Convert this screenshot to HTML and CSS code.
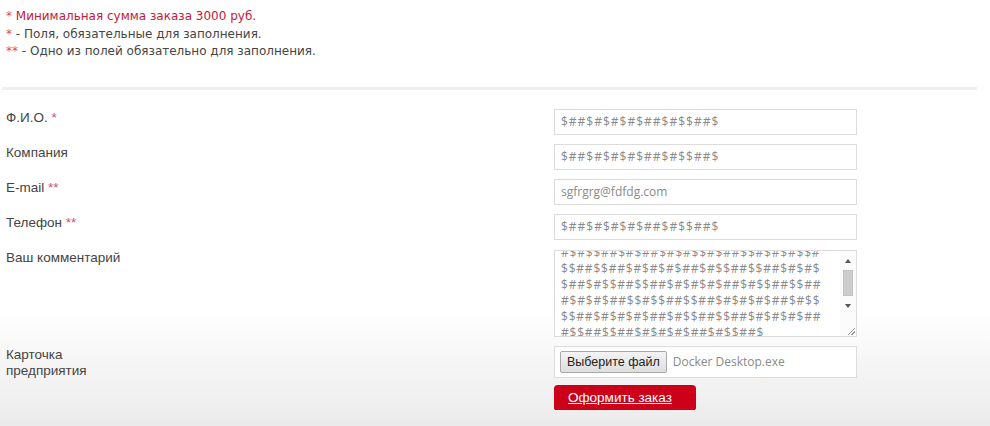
FILE: index.html
```html
<!DOCTYPE html>
<html lang="ru">
  <head>
    <meta charset="UTF-8" />
    <title>Оформление заказа</title>
    <link rel="stylesheet" href="styles.css">
  </head>
  <body>
    <div class="order-page">
      <!-- Notes -->
      <div class="notes">
        <p class="note-min"><span class="star">*</span> Минимальная сумма заказа 3000 руб.</p>
        <p><span class="star">*</span> - Поля, обязательные для заполнения.</p>
        <p><span class="star">**</span> - Одно из полей обязательно для заполнения.</p>
      </div>

      <hr class="divider">

      <!-- Order form -->
      <form class="order-form">
        <label class="form-label">Ф.И.О. <span class="star">*</span></label>
        <input class="form-input symbols" type="text" value="$##$#$#$#$##$#$$##$">

        <label class="form-label">Компания</label>
        <input class="form-input symbols" type="text" value="$##$#$#$#$##$#$$##$">

        <label class="form-label">E-mail <span class="star">**</span></label>
        <input class="form-input" type="text" value="sgfrgrg@fdfdg.com">

        <label class="form-label">Телефон <span class="star">**</span></label>
        <input class="form-input symbols" type="text" value="$##$#$#$#$##$#$$##$">

        <label class="form-label">Ваш комментарий</label>
        <div class="comment-box">
          <div class="comment-text">#$#$$##$#$##$#$#$$#$##$$#$#$#$$#
$$##$$##$#$#$#$##$#$$##$$##$#$#$
$##$#$$##$$##$#$#$#$##$#$$##$$##
#$#$#$##$$#$$##$$##$#$#$#$##$#$$
$$##$#$#$#$##$#$$##$$##$#$#$#$##
#$$##$$##$#$#$#$##$#$$##$</div>
          <div class="scrollbar">
            <span class="arrow-up"></span>
            <span class="thumb"></span>
            <span class="arrow-down"></span>
            <span class="grip"></span>
          </div>
        </div>

        <label class="form-label">Карточка<br>предприятия</label>
        <div class="file-box">
          <button type="button" class="file-button">Выберите файл</button>
          <span class="file-name">Docker Desktop.exe</span>
        </div>

        <span></span>
        <div>
          <button type="button" class="submit-button">Оформить заказ</button>
        </div>
      </form>
    </div>
  </body>
</html>
```

FILE: styles.css
```css
html {
  background: linear-gradient(to bottom, #ffffff 0, #ffffff 310px, #ebebeb 426px);
  min-height: 100%;
}

body {
  margin: 0;
  padding: 0;
  font-family: "Liberation Sans", Arial, sans-serif;
  color: #333;
  overflow: hidden;
}

.order-page {
  padding: 8px 6px 0 6px;
}

.notes {
  font-family: "DejaVu Sans", Tahoma, sans-serif;
  font-size: 12px;
  color: #444;
}

.notes p {
  margin: 0;
  line-height: 17.5px;
}

.notes .note-min {
  color: #c41a3a;
}

.star {
  color: #d0506a;
}

.divider {
  border: none;
  height: 3px;
  background-color: #efefef;
  margin: 26px -1px 0 -4px;
  width: 975px;
}

.order-form {
  display: grid;
  grid-template-columns: 548px 303px;
  column-gap: 0;
  row-gap: 9px;
  margin-top: 19px;
  font-size: 13.5px;
}

.form-label {
  color: #444;
  line-height: 16px;
  padding-top: 1px;
}

.form-input {
  box-sizing: border-box;
  height: 26px;
  width: 303px;
  border: 1px solid #dcdcdc;
  padding: 0 6px;
  font-family: "Open Sans", sans-serif;
  font-size: 12px;
  color: #8a8a8a;
  background: #fff;
  outline: none;
}

.form-input.symbols {
  letter-spacing: 1px;
}

.comment-box {
  box-sizing: border-box;
  display: flex;
  height: 87px;
  border: 1px solid #dcdcdc;
  background: #fff;
  overflow: hidden;
  margin-top: 1px;
}

.comment-text {
  flex: 1;
  padding: 0 2px 0 6px;
  margin-top: -6px;
  white-space: pre;
  overflow: hidden;
  font-family: "Open Sans", sans-serif;
  font-size: 12px;
  line-height: 16px;
  color: #8a8a8a;
  letter-spacing: 0.8px;
}

.scrollbar {
  width: 16px;
  display: flex;
  flex-direction: column;
  align-items: center;
  background: #fbfbfb;
  position: relative;
}

.arrow-up,
.arrow-down {
  width: 0;
  height: 0;
  border-left: 3px solid transparent;
  border-right: 3px solid transparent;
  margin: 8px 0 7px;
}

.arrow-up {
  border-bottom: 4px solid #555;
}

.arrow-down {
  border-top: 4px solid #555;
  margin-top: 8px;
}

.thumb {
  width: 10px;
  height: 26px;
  background: #cdcdcd;
  border: 1px dotted #bbb;
  box-sizing: border-box;
}

.grip {
  position: absolute;
  right: 1px;
  bottom: 1px;
  width: 7px;
  height: 7px;
  background: linear-gradient(135deg, transparent 45%, #999 45%, #999 55%, transparent 55%, transparent 70%, #999 70%, #999 80%, transparent 80%);
}

.file-box {
  box-sizing: border-box;
  display: flex;
  align-items: center;
  gap: 6px;
  height: 32px;
  border: 1px solid #dcdcdc;
  background: #fff;
  padding: 0 5px;
}

.file-button {
  font-family: "Liberation Sans", Arial, sans-serif;
  font-size: 12.5px;
  color: #222;
  height: 22px;
  padding: 0 6px;
  border: 1px solid #a9a9a9;
  border-radius: 2px;
  background: linear-gradient(#f4f4f4, #dedede);
}

.file-name {
  font-family: "Open Sans", sans-serif;
  font-size: 12px;
  color: #8a8a8a;
}

.submit-button {
  margin-top: -3px;
  width: 142px;
  height: 25px;
  padding: 0 0 0 14px;
  text-align: left;
  border: none;
  border-radius: 4px;
  background-color: #cc0019;
  box-shadow: 0 1px 0 #9a0012;
  color: #fff;
  font-family: "Liberation Sans", Arial, sans-serif;
  font-size: 13.5px;
  text-decoration: underline;
  cursor: pointer;
}
```
